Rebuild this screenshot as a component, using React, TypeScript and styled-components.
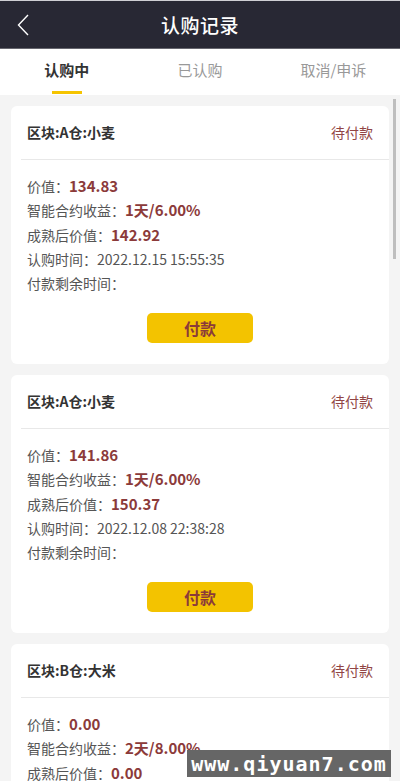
import { FC } from 'react';
import styled, { createGlobalStyle } from 'styled-components';

const GlobalStyle = createGlobalStyle`
  html, body {
    margin: 0;
    padding: 0;
    background: #f4f4f4;
  }
  body {
    font-family: "Noto Sans CJK SC", "Noto Sans", sans-serif;
    color: #555;
  }
  * {
    box-sizing: border-box;
  }
`;

const Page = styled.div`
  width: 400px;
  height: 781px;
  display: flex;
  flex-direction: column;
  position: relative;
  overflow: hidden;
`;

const Header = styled.div`
  flex: none;
  height: 49px;
  background: #282834;
  border-top: 1px solid #cfcfd4;
  border-bottom: 1px solid #66666e;
  display: flex;
  align-items: center;
  justify-content: center;
  position: relative;
`;

const BackButton = styled.div`
  position: absolute;
  left: 14px;
  top: 12px;
  width: 18px;
  height: 24px;
  display: flex;
  align-items: center;
  justify-content: center;
`;

const Title = styled.h1`
  margin: 0;
  font-size: 19px;
  font-weight: 500;
  color: #fff;
  letter-spacing: 0.5px;
`;

const TabBar = styled.div`
  flex: none;
  height: 46px;
  background: #fff;
  display: grid;
  grid-template-columns: repeat(3, 1fr);
`;

const Tab = styled.div<{ $active?: boolean }>`
  display: flex;
  flex-direction: column;
  align-items: center;
  justify-content: flex-end;
  font-size: 15px;
  font-weight: ${(p) => (p.$active ? 700 : 400)};
  color: ${(p) => (p.$active ? '#333' : '#999')};
  span {
    line-height: 20px;
    margin-bottom: 11px;
  }
  &::after {
    content: '';
    width: 30px;
    height: 3px;
    margin-bottom: 1px;
    background: ${(p) => (p.$active ? '#f5c400' : 'transparent')};
  }
`;

const ScrollArea = styled.div`
  flex: 1;
  min-height: 0;
  position: relative;
`;

const List = styled.div`
  height: 100%;
  overflow: hidden;
  padding: 11px 11px 0;
  display: flex;
  flex-direction: column;
  gap: 11px;
`;

// headless chrome draws no scrollbar, so the thumb is painted over the list
const ScrollThumb = styled.div`
  position: absolute;
  right: 4px;
  top: 4px;
  width: 3px;
  height: 160px;
  background: #bebebe;
`;

const Card = styled.div`
  flex: none;
  background: #fff;
  border-radius: 6px;
  height: 258px;
  display: flex;
  flex-direction: column;
`;

const CardHead = styled.div`
  flex: none;
  height: 54px;
  margin-left: 10px;
  padding: 0 16px 1px 6px;
  border-bottom: 1px solid #e8e8e8;
  display: flex;
  align-items: center;
  justify-content: space-between;
`;

const CardTitle = styled.div`
  font-size: 14px;
  font-weight: 700;
  color: #333;
`;

const Status = styled.div`
  font-size: 14px;
  color: #914545;
`;

const CardBody = styled.div`
  padding: 14px 16px 0;
  display: flex;
  flex-direction: column;
`;

const Line = styled.div`
  font-size: 14px;
  line-height: 24.3px;
  color: #555;
  white-space: nowrap;
`;

const Value = styled.b`
  font-size: 15px;
  font-weight: 700;
  color: #8b3a3a;
`;

const PayButton = styled.button`
  align-self: center;
  margin-top: 18px;
  width: 106px;
  height: 30px;
  border: none;
  border-radius: 5px;
  background: #f3c300;
  color: #8b3a3a;
  font-family: inherit;
  font-size: 16px;
  font-weight: 700;
  cursor: pointer;
`;

const Watermark = styled.div`
  position: absolute;
  left: 187px;
  top: 750px;
  width: 204px;
  height: 27px;
  background: #666;
  color: #fff;
  font-family: "DejaVu Sans Mono", monospace;
  font-weight: 700;
  font-size: 20px;
  letter-spacing: 1px;
  display: flex;
  align-items: center;
  justify-content: center;
`;

interface Order {
  title: string;
  value: string;
  profit: string;
  after: string;
  time: string;
}

const orders: Order[] = [
  { title: '区块:A仓:小麦', value: '134.83', profit: '1天/6.00%', after: '142.92', time: '2022.12.15 15:55:35' },
  { title: '区块:A仓:小麦', value: '141.86', profit: '1天/6.00%', after: '150.37', time: '2022.12.08 22:38:28' },
  { title: '区块:B仓:大米', value: '0.00', profit: '2天/8.00%', after: '0.00', time: '2022.12.06 10:12:41' }
];

const OrderCard: FC<{ order: Order }> = ({ order }) => (
  <Card>
    <CardHead>
      <CardTitle>{order.title}</CardTitle>
      <Status>待付款</Status>
    </CardHead>
    <CardBody>
      <Line>
        价值：<Value>{order.value}</Value>
      </Line>
      <Line>
        智能合约收益：<Value>{order.profit}</Value>
      </Line>
      <Line>
        成熟后价值：<Value>{order.after}</Value>
      </Line>
      <Line>认购时间：{order.time}</Line>
      <Line>付款剩余时间：</Line>
      <PayButton>付款</PayButton>
    </CardBody>
  </Card>
);

const App: FC = () => {
  return (
    <Page>
      <GlobalStyle />
      <Header>
        <BackButton>
          <svg width="12" height="22" viewBox="0 0 12 22" fill="none">
            <path d="M11 1L1.5 11L11 21" stroke="#fff" strokeWidth="1.4" />
          </svg>
        </BackButton>
        <Title>认购记录</Title>
      </Header>
      <TabBar>
        <Tab $active>
          <span>认购中</span>
        </Tab>
        <Tab>
          <span>已认购</span>
        </Tab>
        <Tab>
          <span>取消/申诉</span>
        </Tab>
      </TabBar>
      <ScrollArea>
        <List>
          {orders.map((o, i) => (
            <OrderCard key={i} order={o} />
          ))}
        </List>
        <ScrollThumb />
      </ScrollArea>
      <Watermark>www.qiyuan7.com</Watermark>
    </Page>
  );
};

export default App;
